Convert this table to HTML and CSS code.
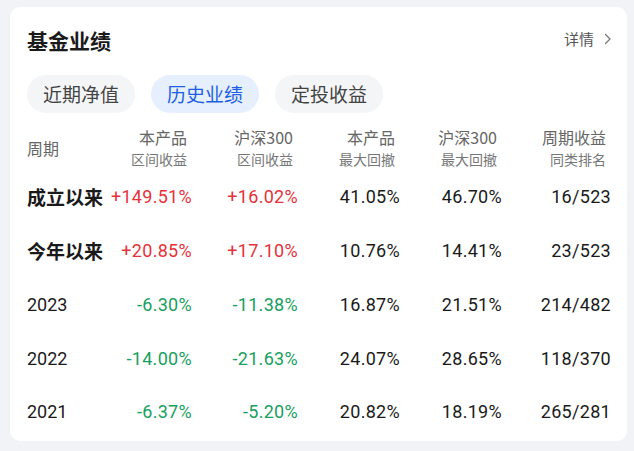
FILE: index.html
```html
<!DOCTYPE html>
<html lang="zh-CN">
<head>
<meta charset="utf-8">
<title>基金业绩</title>
<link rel="stylesheet" href="styles.css">
</head>
<body>
<div class="card">
  <div class="card-head">
    <h1 class="title">基金业绩</h1>
    <a class="more">详情<svg class="chev" width="8" height="12" viewBox="0 0 8 12"><path d="M1.5 1.5 L6 6 L1.5 10.5" fill="none" stroke="#777" stroke-width="1.3" stroke-linecap="round" stroke-linejoin="round"/></svg></a>
  </div>
  <div class="tabs">
    <span class="tab">近期净值</span>
    <span class="tab active">历史业绩</span>
    <span class="tab">定投收益</span>
  </div>
  <div class="table">
    <div class="th th-first"><span class="l1">周期</span></div>
    <div class="th"><span class="l1">本产品</span><span class="l2">区间收益</span></div>
    <div class="th"><span class="l1">沪深300</span><span class="l2">区间收益</span></div>
    <div class="th"><span class="l1">本产品</span><span class="l2">最大回撤</span></div>
    <div class="th"><span class="l1">沪深300</span><span class="l2">最大回撤</span></div>
    <div class="th"><span class="l1">周期收益</span><span class="l2">同类排名</span></div>

    <div class="td label cjk">成立以来</div>
    <div class="td num up">+149.51%</div>
    <div class="td num up">+16.02%</div>
    <div class="td num">41.05%</div>
    <div class="td num">46.70%</div>
    <div class="td num">16/523</div>

    <div class="td label cjk">今年以来</div>
    <div class="td num up">+20.85%</div>
    <div class="td num up">+17.10%</div>
    <div class="td num">10.76%</div>
    <div class="td num">14.41%</div>
    <div class="td num">23/523</div>

    <div class="td label">2023</div>
    <div class="td num down">-6.30%</div>
    <div class="td num down">-11.38%</div>
    <div class="td num">16.87%</div>
    <div class="td num">21.51%</div>
    <div class="td num">214/482</div>

    <div class="td label">2022</div>
    <div class="td num down">-14.00%</div>
    <div class="td num down">-21.63%</div>
    <div class="td num">24.07%</div>
    <div class="td num">28.65%</div>
    <div class="td num">118/370</div>

    <div class="td label">2021</div>
    <div class="td num down">-6.37%</div>
    <div class="td num down">-5.20%</div>
    <div class="td num">20.82%</div>
    <div class="td num">18.19%</div>
    <div class="td num">265/281</div>
  </div>
</div>
</body>
</html>
```
FILE: styles.css
```css
html, body {
  margin: 0;
  padding: 0;
}
body {
  background: #f2f3f7;
  font-family: "Noto Sans CJK SC", "Noto Sans", sans-serif;
  width: 634px;
  height: 451px;
  overflow: hidden;
  padding-top: 7px;
  box-sizing: border-box;
}
.card {
  margin-left: 10px;
  width: 617px;
  height: 434px;
  box-sizing: border-box;
  background: #ffffff;
  border-radius: 10px;
  padding: 19px 16px 0 17px;
}
.card-head {
  display: flex;
  align-items: center;
  justify-content: space-between;
  height: 28px;
}
.title {
  margin: 0;
  font-size: 21px;
  font-weight: 700;
  color: #1a1a1a;
  line-height: 28px;
}
.more {
  display: flex;
  align-items: center;
  gap: 10px;
  font-size: 15px;
  color: #555;
  line-height: 20px;
  margin-top: -2px;
  margin-right: -1px;
}
.chev {
  display: block;
}
.tabs {
  display: flex;
  gap: 16px;
  margin-top: 21px;
}
.tab {
  height: 38px;
  line-height: 38px;
  padding: 0 16px;
  border-radius: 19px;
  background: #f4f5f7;
  color: #444;
  font-size: 19px;
}
.tab.active {
  background: #e6effd;
  color: #1d5fe3;
}
.table {
  display: grid;
  grid-template-columns: 83px 82px 106px 102px 102px 109px;
  grid-auto-rows: 53.75px;
  grid-template-rows: 44px;
  margin-top: 13px;
}
.th {
  display: flex;
  flex-direction: column;
  align-items: flex-end;
  justify-content: center;
  padding-right: 5px;
  color: #666;
}
.th-first {
  align-items: flex-start;
  padding-right: 0;
}
.l1 {
  font-size: 16px;
  line-height: 22px;
}
.l2 {
  font-size: 14px;
  line-height: 22px;
  color: #777;
}
.td {
  display: flex;
  align-items: center;
  color: #1a1a1a;
}
.label {
  font-family: Roboto, "Noto Sans CJK SC", sans-serif;
  font-size: 18px;
}
.label.cjk {
  font-family: "Noto Sans CJK SC", sans-serif;
  font-size: 19px;
  font-weight: 700;
}
.num {
  justify-content: flex-end;
  font-family: Roboto, "Noto Sans", sans-serif;
  font-size: 18px;
  letter-spacing: 0.3px;
}
.up {
  color: #e6323a;
}
.down {
  color: #17a060;
}
```
